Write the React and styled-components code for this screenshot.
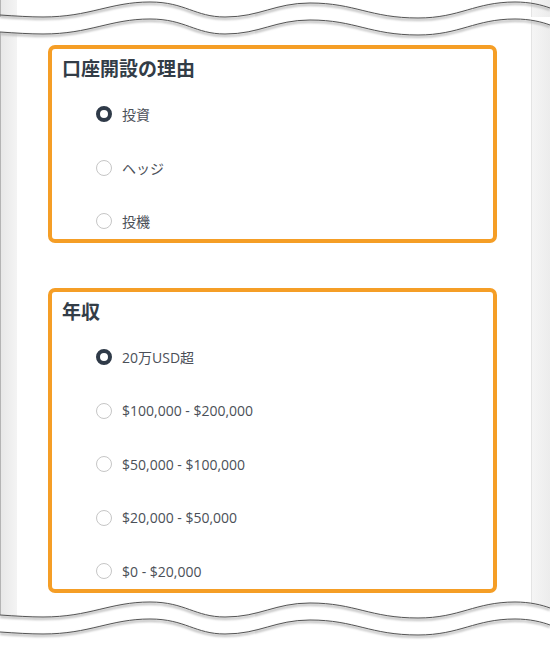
import React from "react";
import styled, { createGlobalStyle } from "styled-components";

const GlobalStyle = createGlobalStyle`
  html, body {
    margin: 0;
    padding: 0;
    background: #ffffff;
  }
  body {
    font-family: "Open Sans", "Noto Sans CJK JP", sans-serif;
  }
`;

// one wave, reused for both torn lines at the top and at the bottom
const WAVE =
  "M0,15 C15,16 30,17 43,17 C90,17 110,2 150,2 C185,2 195,17 225,17 C260,17 275,3 310,3 C355,3 370,18 418,18 C460,18 475,2 515,2 C530,2 542,5 550,8";

const sections = [
  {
    title: "口座開設の理由",
    name: "purpose",
    options: ["投資", "ヘッジ", "投機"],
  },
  {
    title: "年収",
    name: "income",
    options: [
      "20万USD超",
      "$100,000 - $200,000",
      "$50,000 - $100,000",
      "$20,000 - $50,000",
      "$0 - $20,000",
    ],
  },
];

const TornEdge = ({ side }) => {
  const isTop = side === "top";
  const cover = isTop ? `${WAVE} L550,0 L0,0 Z` : `${WAVE} L550,60 L0,60 Z`;
  const lines = isTop ? [0, 17] : [2, 19];
  return (
    <Tear $side={side} viewBox="0 0 550 60" width="550" height="60">
      <defs>
        <filter id={`shade-${side}`} x="-5%" y="-50%" width="110%" height="200%">
          <feGaussianBlur stdDeviation="1.2" />
        </filter>
      </defs>
      <path d={cover} transform={`translate(0,${isTop ? 17 : 2})`} fill="#fff" />
      {lines.map((dy) => (
        <g key={dy} transform={`translate(0,${dy})`}>
          <path
            d={WAVE}
            fill="none"
            stroke="#b5b5b5"
            strokeWidth="2"
            transform="translate(0,1.8)"
            filter={`url(#shade-${side})`}
          />
          <path d={WAVE} fill="none" stroke="#555" strokeWidth="1" />
        </g>
      ))}
    </Tear>
  );
};

const Section = ({ title, name, options }) => (
  <Box>
    <Title>{title}</Title>
    <Options>
      {options.map((label, i) => (
        <Option key={label}>
          <Radio type="radio" name={name} defaultChecked={i === 0} />
          <span>{label}</span>
        </Option>
      ))}
    </Options>
  </Box>
);

export default function App() {
  return (
    <>
      <GlobalStyle />
      <Frame>
        <Page>
          <LeftGutter />
          <Main>
            {sections.map((s) => (
              <Section key={s.name} {...s} />
            ))}
          </Main>
          <RightGutter />
        </Page>
        <TornEdge side="top" />
        <TornEdge side="bottom" />
      </Frame>
    </>
  );
}

const Frame = styled.div`
  position: relative;
  width: 550px;
  height: 650px;
  overflow: hidden;
  background: #ffffff;
`;

const Page = styled.div`
  display: flex;
  height: 100%;
`;

const LeftGutter = styled.div`
  width: 16px;
  flex-shrink: 0;
  border-left: 1px solid #b4b4b4;
  background: linear-gradient(to right, #e8e8e8, #f4f4f4);
`;

const RightGutter = styled.div`
  width: 18px;
  flex-shrink: 0;
  border-left: 1px solid #e4e4e4;
  background: linear-gradient(to right, #f5f5f5, #ececec);
`;

const Main = styled.main`
  flex: 1;
  display: flex;
  flex-direction: column;
  gap: 45px;
  padding: 45px 34px 0 31px;
`;

const Box = styled.section`
  border: 4px solid #f59e26;
  border-radius: 7px;
  padding: 7px 10px;
`;

const Title = styled.h2`
  margin: 0;
  font-family: "Noto Sans CJK JP", sans-serif;
  font-size: 19px;
  font-weight: 700;
  line-height: 24px;
  color: #333d47;
`;

const Options = styled.div`
  display: flex;
  flex-direction: column;
  gap: 31.5px;
  margin-top: 23px;
  padding-left: 34px;
`;

const Option = styled.label`
  display: flex;
  align-items: center;
  gap: 10px;
  height: 22px;
  font-size: 14px;
  color: #4b5058;
`;

const Radio = styled.input`
  appearance: none;
  box-sizing: border-box;
  flex-shrink: 0;
  margin: 0;
  width: 16px;
  height: 16px;
  border-radius: 50%;
  border: 1px solid #c6c6c6;
  background: #ffffff;

  &:checked {
    border: 4.5px solid #2f3a48;
  }
`;

const Tear = styled.svg`
  position: absolute;
  left: 0;
  top: ${(p) => (p.$side === "top" ? "0" : "598px")};
  display: block;
  overflow: visible;
`;
